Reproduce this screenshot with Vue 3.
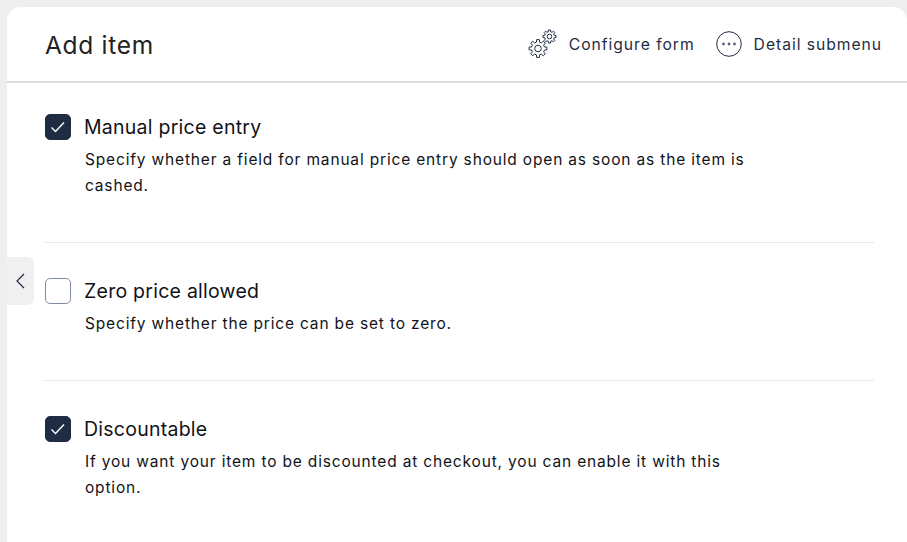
<script setup>
const items = [
  { title: 'Manual price entry', checked: true, desc: ['Specify whether a field for manual price entry should open as soon as the item is', 'cashed.'] },
  { title: 'Zero price allowed', checked: false, desc: ['Specify whether the price can be set to zero.'] },
  { title: 'Discountable', checked: true, desc: ['If you want your item to be discounted at checkout, you can enable it with this', 'option.'] },
]
function gear(cx, cy, ro, ri, n) {
  const pts = []
  const step = (Math.PI * 2) / n
  for (let i = 0; i < n; i++) {
    const a = i * step - Math.PI / 2
    const w = step * 0.2
    const w2 = step * 0.3
    const p = (r, t) => `${(cx + r * Math.cos(t)).toFixed(2)} ${(cy + r * Math.sin(t)).toFixed(2)}`
    pts.push(p(ri, a - w2), p(ro, a - w), p(ro, a + w), p(ri, a + w2))
  }
  return 'M' + pts.join('L') + 'Z'
}
const bigGear = gear(10, 19.5, 9, 6.6, 8)
const smallGear = gear(21.5, 7.5, 6.6, 4.9, 8)
</script>

<template>
  <div class="page">
    <div class="card">
      <header class="head">
        <h1 class="title">Add item</h1>
        <div class="actions">
          <button class="action gears">
            <svg width="29" height="30" viewBox="0 0 29 30" fill="none" stroke="#1f2d44" stroke-width="1" stroke-linejoin="round">
              <path :d="bigGear" />
              <circle cx="10" cy="19.5" r="3.3" />
              <path :d="smallGear" />
              <circle cx="21.5" cy="7.5" r="2.3" />
            </svg>
            <span>Configure form</span>
          </button>
          <button class="action more">
            <svg width="26" height="26" viewBox="0 0 26 26" fill="none">
              <circle cx="13" cy="13" r="12.3" stroke="#1f2d44" stroke-width="1" />
              <circle cx="7.5" cy="13" r="1.4" fill="#5a5f73" />
              <circle cx="13" cy="13" r="1.4" fill="#5a5f73" />
              <circle cx="18.5" cy="13" r="1.4" fill="#5a5f73" />
            </svg>
            <span>Detail submenu</span>
          </button>
        </div>
      </header>
      <main class="list">
        <section v-for="item in items" :key="item.title" class="row">
          <div class="label">
            <span class="box" :class="{ on: item.checked }">
              <svg v-if="item.checked" width="16" height="12" viewBox="0 0 16 12" fill="none">
                <path d="M1.5 6.5 L5.5 10.5 L14 1.5" stroke="#fff" stroke-width="1.4" />
              </svg>
            </span>
            <span class="name">{{ item.title }}</span>
          </div>
          <p class="desc">
            <span v-for="line in item.desc" :key="line" class="line">{{ line }}</span>
          </p>
        </section>
      </main>
      <button class="tab" aria-label="Collapse">
        <svg width="10" height="16" viewBox="0 0 10 16" fill="none">
          <path d="M8 1 L1 8 L8 15" stroke="#1f2d44" stroke-width="1.2" />
        </svg>
      </button>
    </div>
  </div>
</template>

<style>
html, body { margin: 0; height: 100%; overflow: hidden; background: #eeeeee; }
</style>

<style scoped>
.page {
  height: 542px;
  padding: 7px 0 0 7px;
  box-sizing: border-box;
  font-family: Inter, "Liberation Sans", sans-serif;
  overflow: hidden;
}
.card {
  position: relative;
  height: 100%;
  background: #fff;
  border-radius: 14px 14px 0 0;
}
.head {
  height: 76px;
  box-sizing: border-box;
  border-bottom: 2px solid #dddddd;
  display: flex;
  align-items: center;
  justify-content: space-between;
  padding: 0 25px 0 38px;
}
.title {
  margin: 2px 0 0;
  font-size: 24.5px;
  font-weight: 400;
  letter-spacing: 0.7px;
  color: #222;
}
.actions { display: flex; gap: 21px; align-items: center; }
.action {
  display: flex;
  align-items: center;
  gap: 12px;
  border: 0;
  background: none;
  padding: 0;
  font: inherit;
  font-size: 15.7px;
  letter-spacing: 0.95px;
  color: #1f2d44;
}
.list { padding: 0 33px 0 37px; }
.row {
  height: 138px;
  box-sizing: border-box;
  padding-top: 35px;
  border-bottom: 1px solid #e8e8ee;
}
.row:first-child { height: 160px; padding-top: 31px; }
.row:last-child { border-bottom: 0; }
.label { display: flex; align-items: center; gap: 13px; padding-left: 1px; }
.box {
  width: 26px;
  height: 26px;
  box-sizing: border-box;
  border-radius: 5px;
  border: 1px solid #7f8ba0;
  display: flex;
  align-items: center;
  justify-content: center;
  background: #fff;
}
.box.on { background: #1f2d44; border-color: #1f2d44; }
.name { font-size: 19.5px; letter-spacing: 0.25px; color: #111318; }
.desc {
  margin: 7px 0 0 41px;
  font-size: 15.5px;
  letter-spacing: 0.83px;
  line-height: 26px;
  color: #111318;
}
.line { display: block; }
.tab {
  position: absolute;
  left: 0;
  top: 250px;
  width: 27px;
  height: 48px;
  border: 0;
  padding: 0;
  background: #f0f0f0;
  border-radius: 0 6px 6px 0;
  display: flex;
  align-items: center;
  justify-content: center;
}
</style>
